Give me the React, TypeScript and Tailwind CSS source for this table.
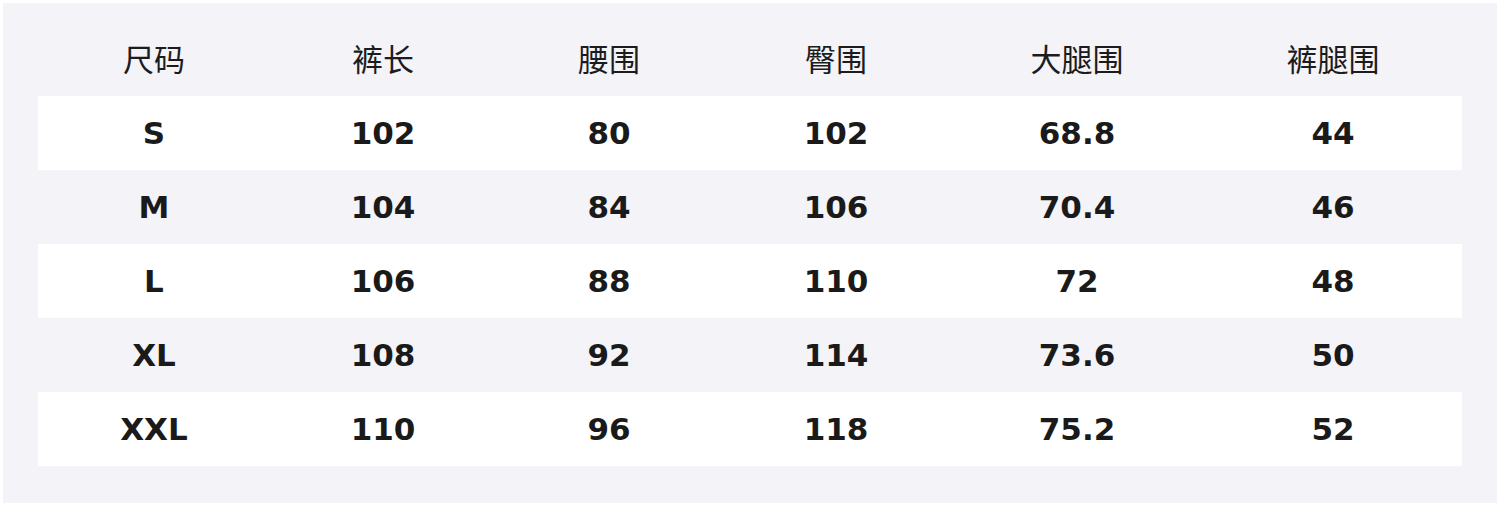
const headers = ["尺码", "裤长", "腰围", "臀围", "大腿围", "裤腿围"];

const rows = [
    ["S", "102", "80", "102", "68.8", "44"],
    ["M", "104", "84", "106", "70.4", "46"],
    ["L", "106", "88", "110", "72", "48"],
    ["XL", "108", "92", "114", "73.6", "50"],
    ["XXL", "110", "96", "118", "75.2", "52"],
];

const cols = "grid grid-cols-[232px_226px_226px_228px_254px_258px]";

const App = () => {
    return (
        <div className="w-[1500px] h-[506px] bg-white p-[3px]">
            <div className="h-full w-full bg-[#f3f3f8] px-[35px]">
                <div className={`${cols} h-[93px] pt-[16px] items-center text-[#1c1c1c] text-[31px] font-['Noto_Sans_CJK_SC',sans-serif]`}>
                    {headers.map((h) => (
                        <div key={h} className="text-center leading-none">{h}</div>
                    ))}
                </div>
                {rows.map((r, i) => (
                    <div
                        key={r[0]}
                        className={`${cols} h-[74px] items-center ${i % 2 === 0 ? "bg-white" : ""} text-[#1a1a1a] text-[31px] font-bold font-['DejaVu_Sans',sans-serif]`}
                    >
                        {r.map((c, j) => (
                            <div key={j} className="text-center leading-none">{c}</div>
                        ))}
                    </div>
                ))}
            </div>
        </div>
    );
};

export default App;
